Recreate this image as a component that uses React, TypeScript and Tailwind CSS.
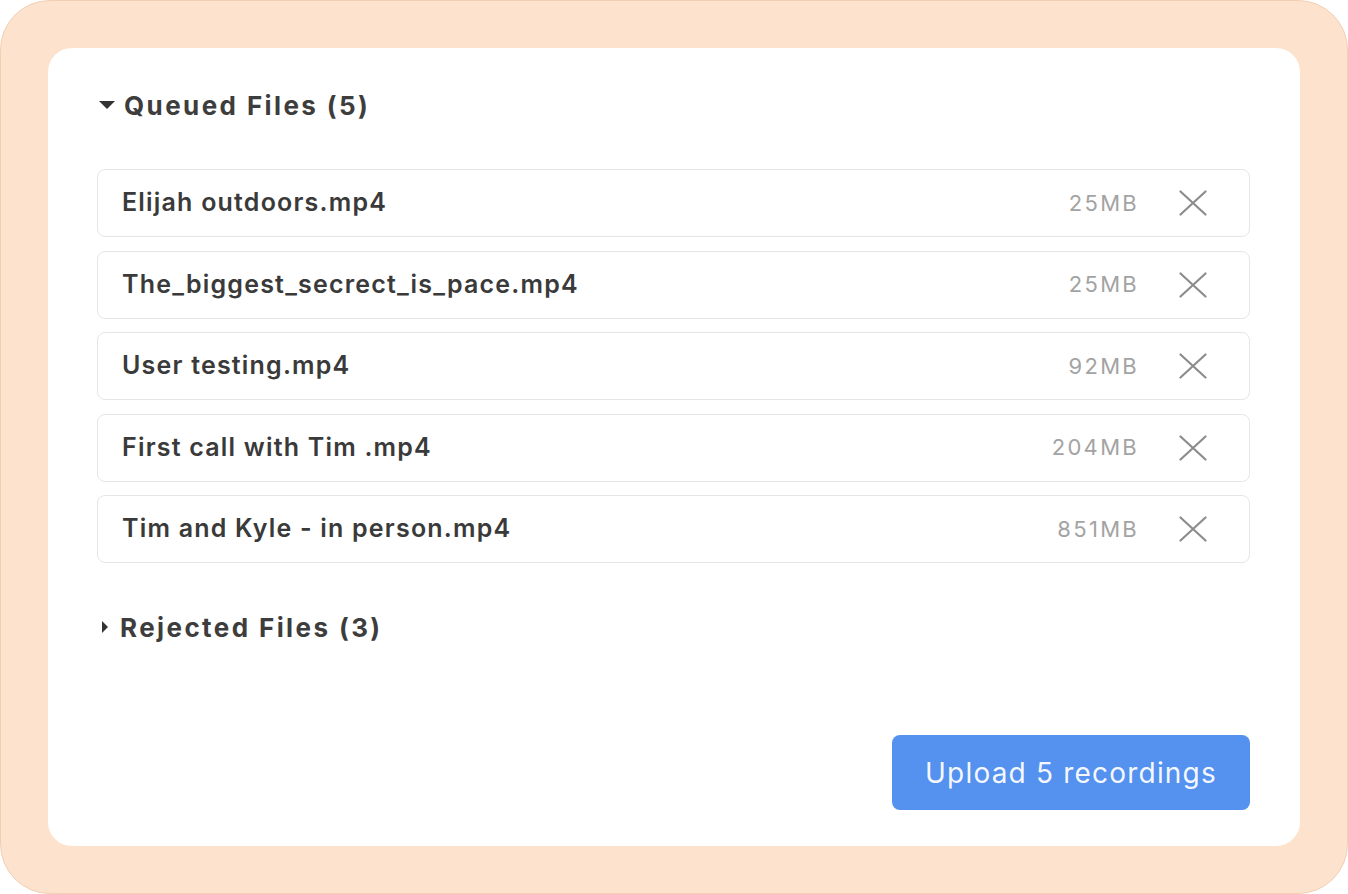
import React from "react";

const files = [
  { name: "Elijah outdoors.mp4", size: "25MB" },
  { name: "The_biggest_secrect_is_pace.mp4", size: "25MB" },
  { name: "User testing.mp4", size: "92MB" },
  { name: "First call with Tim .mp4", size: "204MB" },
  { name: "Tim and Kyle - in person.mp4", size: "851MB" },
];

function XIcon() {
  return (
    <svg width="28" height="28" viewBox="0 0 28 28" fill="none">
      <path d="M1.5 2.5L26.5 25.5M26.5 2.5L1.5 25.5" stroke="#8c8c8c" strokeWidth="2.2" strokeLinecap="round" />
    </svg>
  );
}

export default function App() {
  return (
    <div className="w-[1348px] h-[894px] bg-white" style={{ fontFamily: "Inter, 'Noto Sans', sans-serif" }}>
      <div className="w-full h-full rounded-[50px] bg-[#fde3cd] border border-[#f1cfb3] pt-[47px] pb-[47px] pl-[47px] pr-[47px]">
        <div className="w-full h-full bg-white rounded-[24px] pl-[49px] pr-[50px] pt-[41px] pb-[36px] flex flex-col">
          <div className="flex items-center h-[32px] text-[#3d3d3d]">
            <svg width="18" height="10" viewBox="0 0 18 10" className="ml-[1px] mr-[8px]">
              <path d="M1 1H17L9 9Z" fill="#333" />
            </svg>
            <span className="text-[26px] font-bold tracking-[2.4px]">Queued Files (5)</span>
          </div>
          <div className="mt-[48px] flex flex-col gap-[13.5px]">
            {files.map((f) => (
              <div
                key={f.name}
                className="h-[68px] border border-[#e6e6e6] rounded-[8px] flex items-center pl-[24px] pr-[42px]"
              >
                <span className="flex-1 text-[25px] font-semibold text-[#3a3a3a] tracking-[1.2px]">{f.name}</span>
                <span className="text-[22px] text-[#a3a3a3] tracking-[2.3px] mr-[40px]">{f.size}</span>
                <XIcon />
              </div>
            ))}
          </div>
          <div className="mt-[48px] flex items-center h-[32px] text-[#3d3d3d]">
            <svg width="8" height="14" viewBox="0 0 8 14" className="ml-[4px] mr-[11px]">
              <path d="M1 1V13L7 7Z" fill="#333" />
            </svg>
            <span className="text-[26px] font-bold tracking-[2.4px]">Rejected Files (3)</span>
          </div>
          <div className="mt-auto flex justify-end">
            <button className="w-[358px] h-[75px] rounded-[8px] bg-[#5592f0] text-white/95 text-[28px] tracking-[1.2px] flex items-center justify-center">
              Upload 5 recordings
            </button>
          </div>
        </div>
      </div>
    </div>
  );
}
